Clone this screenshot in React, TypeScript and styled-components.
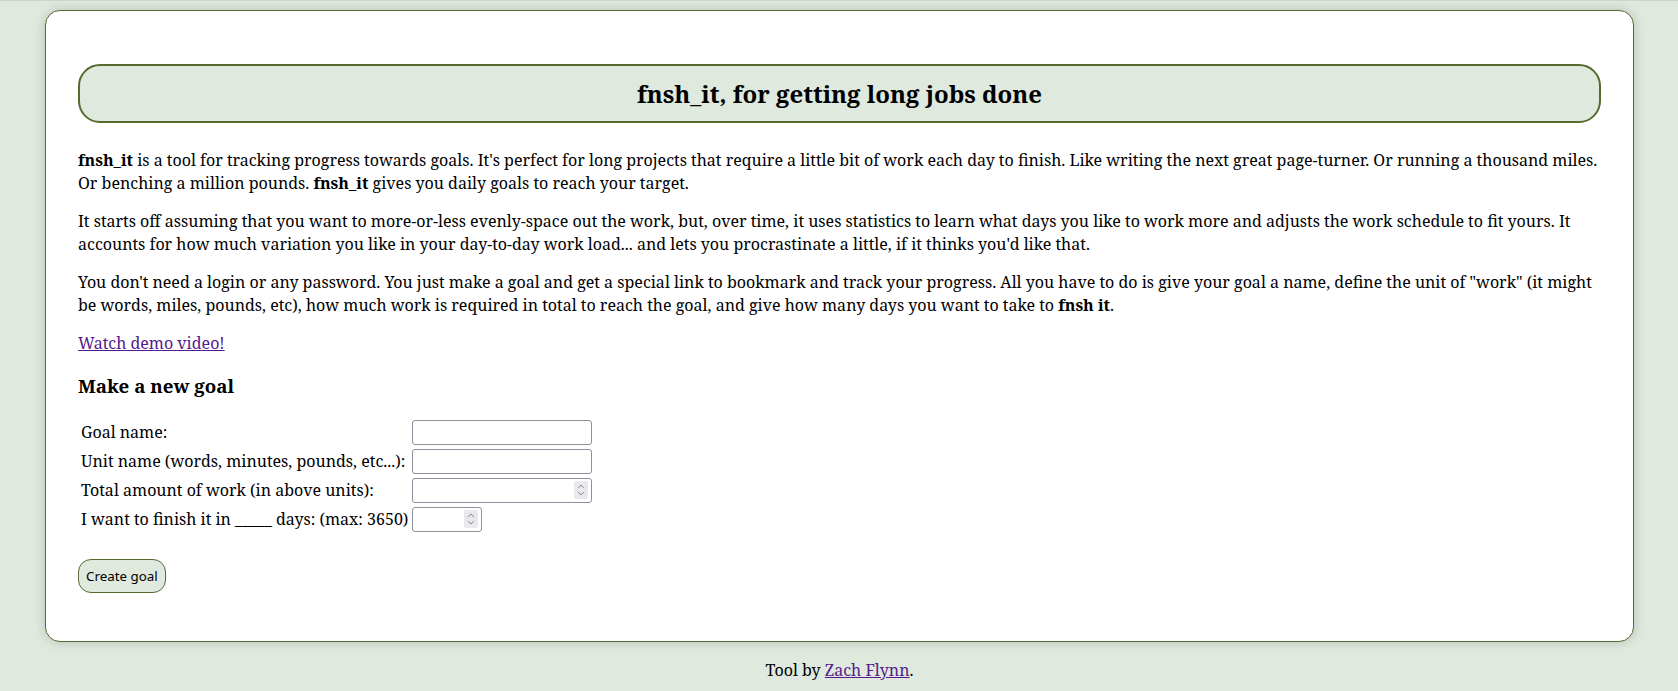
import React from "react";
import styled, { createGlobalStyle } from "styled-components";

const GlobalStyle = createGlobalStyle`
  html {
    background: #dfe9de;
    border-top: 1px solid #cfd3cf;
  }
  body {
    margin: 0;
    font-family: "Noto Serif", "DejaVu Serif", serif;
    font-size: 16px;
    line-height: 22.5px;
    color: #000;
    background: #dfe9de;
  }
`;

const Page = styled.div`
  padding: 9px 44px 0 45px;
`;

const Card = styled.main`
  background: #fff;
  border: 1px solid #556b2f;
  border-radius: 15px;
  box-shadow: 0 0 12px rgba(0, 0, 0, 0.18);
  padding: 32px 32px;
`;

const Banner = styled.h2`
  margin: 21px 0 26px;
  background: #dfe9de;
  border: 2px solid #556b2f;
  border-radius: 22px;
  padding: 12px 10px;
  font-size: 24px;
  line-height: 31px;
  text-align: center;
  font-weight: bold;
`;

const Para = styled.p`
  margin: 16px 0;
`;

const Link = styled.a`
  color: #551a8b;
  text-decoration: underline;
`;

const SubHead = styled.h3`
  font-size: 18.72px;
  line-height: 25px;
  margin: 18.72px 0;
  font-weight: bold;
`;

const Form = styled.form`
  margin: 0 0 16px;
`;

const FormTable = styled.table`
  border-spacing: 2px;
  margin-left: 0;
`;

const LabelCell = styled.td`
  padding: 1px;
  vertical-align: middle;
  white-space: nowrap;
`;

const FieldCell = styled.td`
  padding: 1px;
  vertical-align: middle;
`;

const TextInput = styled.input`
  box-sizing: border-box;
  width: 180px;
  height: 25px;
  border: 1px solid #8f8f9d;
  border-radius: 3px;
  padding: 2px 4px;
  font: 13.33px "Noto Sans", sans-serif;
  display: block;
  background: #fff;
`;

const NumberBox = styled.div<{ $w: number }>`
  box-sizing: border-box;
  width: ${(p) => p.$w}px;
  height: 25px;
  border: 1px solid #8f8f9d;
  border-radius: 3px;
  display: flex;
  align-items: center;
  background: #fff;
  padding-right: 3px;
`;

const NumberInput = styled.input`
  flex: 1;
  min-width: 0;
  border: none;
  outline: none;
  height: 100%;
  padding: 0 4px;
  font: 13.33px "Noto Sans", sans-serif;
  background: transparent;
  -moz-appearance: textfield;
  &::-webkit-inner-spin-button,
  &::-webkit-outer-spin-button {
    -webkit-appearance: none;
    margin: 0;
  }
`;

const Spinner = styled.span`
  width: 14px;
  height: 18px;
  background: #e9e9ed;
  border-radius: 2px;
  display: flex;
  flex-direction: column;
  align-items: center;
  justify-content: center;
  gap: 2px;
`;

const SubmitButton = styled.button`
  margin-top: 24px;
  display: block;
  background: #dfe9de;
  border: 1px solid #556b2f;
  border-radius: 13px;
  height: 34px;
  padding: 0 7px;
  font: 13.33px "Noto Sans", "Open Sans", sans-serif;
  color: #000;
  cursor: pointer;
`;

const Footer = styled.footer`
  text-align: center;
  padding: 17px 0 8px;
`;

const Chevrons = () => (
  <Spinner>
    <svg width="8" height="5" viewBox="0 0 8 5">
      <path d="M1 4.2 L4 1 L7 4.2" fill="none" stroke="#8a8a8a" strokeWidth="1" />
    </svg>
    <svg width="8" height="5" viewBox="0 0 8 5">
      <path d="M1 0.8 L4 4 L7 0.8" fill="none" stroke="#8a8a8a" strokeWidth="1" />
    </svg>
  </Spinner>
);

const NumberField = ({ width }: { width: number }) => (
  <NumberBox $w={width}>
    <NumberInput type="number" />
    <Chevrons />
  </NumberBox>
);

export default function App() {
  return (
    <>
      <GlobalStyle />
      <Page>
        <Card>
          <Banner>fnsh_it, for getting long jobs done</Banner>
          <Para>
            <b>fnsh_it</b> is a tool for tracking progress towards goals. It's perfect for long
            projects that require a little bit of work each day to finish. Like writing the next
            great page-turner. Or running a thousand miles. Or benching a million pounds.{" "}
            <b>fnsh_it</b> gives you daily goals to reach your target.
          </Para>
          <Para>
            It starts off assuming that you want to more-or-less evenly-space out the work, but,
            over time, it uses statistics to learn what days you like to work more and adjusts the
            work schedule to fit yours. It accounts for how much variation you like in your
            day-to-day work load... and lets you procrastinate a little, if it thinks you'd like
            that.
          </Para>
          <Para>
            You don't need a login or any password. You just make a goal and get a special link to
            bookmark and track your progress. All you have to do is give your goal a name, define
            the unit of "work" (it might be words, miles, pounds, etc), how much work is required in
            total to reach the goal, and give how many days you want to take to <b>fnsh it</b>.
          </Para>
          <Para>
            <Link href="#">Watch demo video!</Link>
          </Para>
          <SubHead>Make a new goal</SubHead>
          <Form onSubmit={(e) => e.preventDefault()}>
            <FormTable>
              <tbody>
                <tr>
                  <LabelCell>Goal name:</LabelCell>
                  <FieldCell>
                    <TextInput type="text" />
                  </FieldCell>
                </tr>
                <tr>
                  <LabelCell>Unit name (words, minutes, pounds, etc...):</LabelCell>
                  <FieldCell>
                    <TextInput type="text" />
                  </FieldCell>
                </tr>
                <tr>
                  <LabelCell>Total amount of work (in above units):</LabelCell>
                  <FieldCell>
                    <NumberField width={180} />
                  </FieldCell>
                </tr>
                <tr>
                  <LabelCell>I want to finish it in _____ days: (max: 3650)</LabelCell>
                  <FieldCell>
                    <NumberField width={70} />
                  </FieldCell>
                </tr>
              </tbody>
            </FormTable>
            <SubmitButton type="submit">Create goal</SubmitButton>
          </Form>
        </Card>
        <Footer>
          Tool by <Link href="#">Zach Flynn</Link>.
        </Footer>
      </Page>
    </>
  );
}
